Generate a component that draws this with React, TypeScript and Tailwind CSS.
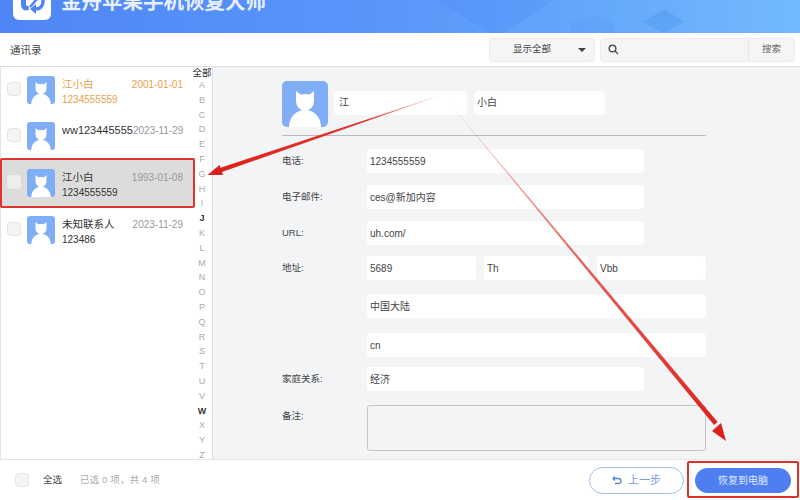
const font = { fontFamily: '"Liberation Sans", "Noto Sans CJK SC", sans-serif' };

const letters = "ABCDEFGHIJKLMNOPQRSTUVWXYZ".split("");
const strong = ["J", "W"];

const contacts = [
  { name: "江小白", phone: "1234555559", date: "2001-01-01", tone: "orange", box: "h-[48px] pt-[8px]" },
  { name: "ww123445555", phone: "", date: "2023-11-29", tone: "plain", box: "h-[42px] pt-[6px]" },
  { name: "江小白", phone: "1234555559", date: "1993-01-08", tone: "active", box: "h-[50px] pt-[11px]" },
  { name: "未知联系人", phone: "123486", date: "2023-11-29", tone: "plain", box: "h-[44px] pt-[8px]" },
];

function Avatar({ size }: { size: number }) {
  return (
    <svg width={size} height={size} viewBox="0 0 46 46" className="shrink-0">
      <rect width="46" height="46" rx="5" fill="#7fadf6" />
      <path d="M14 10l4.500 3.500q4.500-1 9 0L32 10v10a9 10 0 0 1-18 0z" fill="#fff" />
      <path d="M7 46c0-10 7-17 16-17s16 7 16 17z" fill="#fff" />
    </svg>
  );
}

function ContactRow({ name, phone, date, tone, box }: (typeof contacts)[number]) {
  const nameColor = tone === "orange" ? "text-[#eba04c]" : "text-[#333]";
  const dateColor = tone === "orange" ? "text-[#eba04c]" : "text-[#999]";
  return (
    <div className={`flex items-start pl-[6px] pr-[10px] ${box} ${tone === "active" ? "bg-[#dcdcdc]" : ""}`}>
      <div
        className={`w-[14px] h-[14px] mt-[6px] rounded-sm shrink-0 ${
          tone === "active" ? "bg-[#eeeeee]" : "bg-[#f5f5f5] border border-[#e4e4e4]"
        }`}
      />
      <div className="ml-[6px]">
        <Avatar size={28} />
      </div>
      <div className="ml-[7px] pt-[1px] flex-1 min-w-0 text-[10.500px] leading-[15px]">
        <div className="flex justify-between whitespace-nowrap">
          <span className={`${nameColor} ${name.startsWith("ww") ? "text-[11px]" : ""}`}>{name}</span>
          <span className={`${dateColor} text-[10px]`}>{date}</span>
        </div>
        {phone && <div className={`${nameColor} text-[10px]`}>{phone}</div>}
      </div>
    </div>
  );
}

function Field({ value, className }: { value: string; className: string }) {
  return (
    <div className={`h-[24px] bg-white rounded-sm pl-[3px] flex items-center text-[10px] text-[#444] ${className}`}>
      {value}
    </div>
  );
}

function FormRow({ label, children, className }: { label: string; children: React.ReactNode; className: string }) {
  return (
    <div className={`flex items-center ${className}`}>
      <div className="w-[85px] mt-[1px] text-[9.500px] text-[#444] shrink-0">{label}</div>
      {children}
    </div>
  );
}

export default function App() {
  return (
    <div className="w-[800px] h-[500px] relative overflow-hidden bg-white flex flex-col" style={font}>
      {/* header */}
      <header className="h-[33px] shrink-0 relative overflow-hidden flex items-end pl-[13px] pb-[21px] bg-gradient-to-r from-[#4f86f6] via-[#5a97fa] to-[#72bafd]">
        <div className="absolute left-[13px] -top-[10px] w-[38px] h-[30px] bg-white rounded-md">
          <svg width="38" height="30" viewBox="0 0 38 30" fill="none" stroke="#4f86f6">
            <path d="M10.500 4v11a3 3 0 0 0 3 3" strokeWidth="5" strokeLinecap="round" />
            <path d="M17 17l7-8" strokeWidth="2.500" />
            <path d="M30 8v4a7 7 0 0 1-7 7h-3" strokeWidth="3.500" />
            <path d="M23 14l-6 5 6 5z" fill="#4f86f6" stroke="none" />
          </svg>
        </div>
        <div className="ml-[48px] text-[20.500px] leading-[20px] font-bold text-[#e8f0ff] whitespace-nowrap">
          金舟苹果手机恢复大师
        </div>
        <svg className="absolute left-[430px] top-0" width="300" height="33" viewBox="0 0 300 33">
          <path d="M7 0h115l-30 22-20 11h-12z" fill="#4c8cf5" opacity="0.3" />
          <path d="M140 22l25-6 20 6v11h-45z" fill="#5a9df7" opacity="0.4" />
          <path d="M170 0h45v22l-10 11-35-15z" fill="#63adfb" opacity="0.4" />
          <path d="M212 22l22-13 20 13-20 11z" fill="#4f97ef" opacity="0.45" />
        </svg>
      </header>

      {/* toolbar */}
      <div className="h-[34px] shrink-0 flex items-center border-b border-[#dddddd] pl-[10px] pr-[5px]">
        <span className="text-[10.500px] text-[#444] mt-[2px]">通讯录</span>
        <div className="ml-auto w-[106px] h-[24px] bg-[#f5f5f5] border border-[#ececec] rounded-sm flex items-center pl-[23px] pr-[8px] text-[9.500px] text-[#444]">
          显示全部
          <span className="ml-auto w-0 h-0 border-x-[4px] border-x-transparent border-t-[4px] border-t-[#444]" />
        </div>
        <div className="ml-[5px] w-[195px] h-[24px] bg-[#f5f5f5] border border-[#ececec] rounded-sm flex items-center">
          <svg className="ml-[7px]" width="11" height="11" viewBox="0 0 11 11" fill="none" stroke="#555" strokeWidth="1.500">
            <circle cx="4.500" cy="4.500" r="3.300" />
            <path d="M7 7l3 3" />
          </svg>
          <div className="ml-auto w-[46px] h-full border-l border-[#e4e4e4] flex items-center justify-center text-[9.500px] text-[#666]">
            搜索
          </div>
        </div>
      </div>

      {/* body */}
      <div className="h-[393px] shrink-0 flex overflow-hidden border-b border-[#e4e4e4]">
        <div className="w-[193px] shrink-0 border-l border-[#e4e4e4] pt-[1px]">
          {contacts.map((c) => (
            <ContactRow key={c.date + c.name} {...c} />
          ))}
        </div>
        <div className="w-[20px] shrink-0 pr-[1px] border-r border-[#e0e0e0] flex flex-col items-center text-[9px] leading-[14.800px] text-[#aaa]">
          <span className="text-[#333] whitespace-nowrap text-[9.500px] leading-[11px]">全部</span>
          {letters.map((l) => (
            <span key={l} className={strong.includes(l) ? "text-[#333] font-bold" : ""}>
              {l}
            </span>
          ))}
        </div>
        <div className="flex-1 bg-[#f3f4f6] pl-[69px] pt-[14px]">
          <div className="w-[424px]">
            <div className="flex items-center border-b border-[#b9bbbd] pb-[8px]">
              <Avatar size={46} />
              <Field value="江" className="ml-[6px] w-[133px] mt-[-3px] pl-[5px]" />
              <Field value="小白" className="ml-[7px] w-[131px] mt-[-3px]" />
            </div>
            <FormRow label="电话:" className="mt-[13px]">
              <Field value="1234555559" className="w-[277px]" />
            </FormRow>
            <FormRow label="电子邮件:" className="mt-[12px]">
              <Field value="ces@新加内容" className="w-[277px]" />
            </FormRow>
            <FormRow label="URL:" className="mt-[12px]">
              <Field value="uh.com/" className="w-[277px]" />
            </FormRow>
            <FormRow label="地址:" className="mt-[11px]">
              <div className="flex gap-[8px]">
                <Field value="5689" className="w-[109px]" />
                <Field value="Th" className="w-[105px]" />
                <Field value="Vbb" className="w-[109px]" />
              </div>
            </FormRow>
            <div className="ml-[85px] mt-[14px]">
              <Field value="中国大陆" className="w-[339px]" />
            </div>
            <div className="ml-[85px] mt-[15px]">
              <Field value="cn" className="w-[339px]" />
            </div>
            <FormRow label="家庭关系:" className="mt-[10px]">
              <Field value="经济" className="w-[277px]" />
            </FormRow>
            <div className="flex mt-[14px]">
              <div className="w-[85px] text-[9.500px] text-[#444] mt-[4px]">备注:</div>
              <div className="w-[339px] h-[46px] bg-[#f3f4f6] border border-[#c4c6c8] rounded-[3px]" />
            </div>
          </div>
        </div>
      </div>

      {/* footer */}
      <footer className="flex-1 flex items-center pl-[15px] pr-[9px]">
        <div className="w-[14px] h-[14px] bg-[#f5f5f5] border border-[#e4e4e4] rounded-sm" />
        <span className="ml-[14px] text-[9.500px] text-[#444]">全选</span>
        <span className="ml-[18px] text-[9.500px] tracking-[0.15px] text-[#aaa]">已选 0 项，共 4 项</span>
        <button className="ml-auto w-[95px] h-[27px] rounded-full border border-[#a9bbe8] bg-white text-[#7c9ae6] text-[11px] flex items-center justify-center gap-[5px]">
          <svg width="11" height="11" viewBox="0 0 11 11" fill="none" stroke="#5d7fd8" strokeWidth="1.300">
            <path d="M3 1.500L1 3.500l2 2" />
            <path d="M1.500 3.500h5a2.500 2.500 0 0 1 0 5H3" />
          </svg>
          上一步
        </button>
        <button className="ml-[11px] w-[96px] h-[25px] rounded-full bg-[#4f7ef0] text-[#dfe9ff] text-[10px]">恢复到电脑</button>
      </footer>

      {/* annotation overlay */}
      <div className="absolute left-0 top-[158px] w-[195px] h-[50px] border-2 border-[#e0332f] rounded-[2px] pointer-events-none" />
      <div className="absolute left-[687px] top-[461px] w-[112px] h-[37px] border-2 border-[#df2f2b] rounded-[2px] pointer-events-none" />
      <svg className="absolute inset-0 pointer-events-none" width="800" height="500" viewBox="0 0 800 500">
        <defs>
          <linearGradient id="a1" x1="447" y1="93" x2="207" y2="175" gradientUnits="userSpaceOnUse">
            <stop offset="0" stopColor="#e2352f" stopOpacity="0.15" />
            <stop offset="0.35" stopColor="#e2352f" />
            <stop offset="1" stopColor="#dd1f1a" />
          </linearGradient>
          <linearGradient id="a2" x1="447" y1="100" x2="725" y2="440" gradientUnits="userSpaceOnUse">
            <stop offset="0" stopColor="#e2352f" stopOpacity="0.2" />
            <stop offset="0.5" stopColor="#e2352f" stopOpacity="0.8" />
            <stop offset="1" stopColor="#dd1f1a" />
          </linearGradient>
        </defs>
        <path d="M447 93L219 173l-1.500-4.200z" fill="url(#a1)" />
        <path d="M207.500 175l12-10 3.500 10z" fill="#dd1f1a" />
        <path d="M447 100L714 425l3.600-3z" fill="url(#a2)" />
        <path d="M726 441l-14-10 9-8z" fill="#dd1f1a" />
      </svg>
    </div>
  );
}
